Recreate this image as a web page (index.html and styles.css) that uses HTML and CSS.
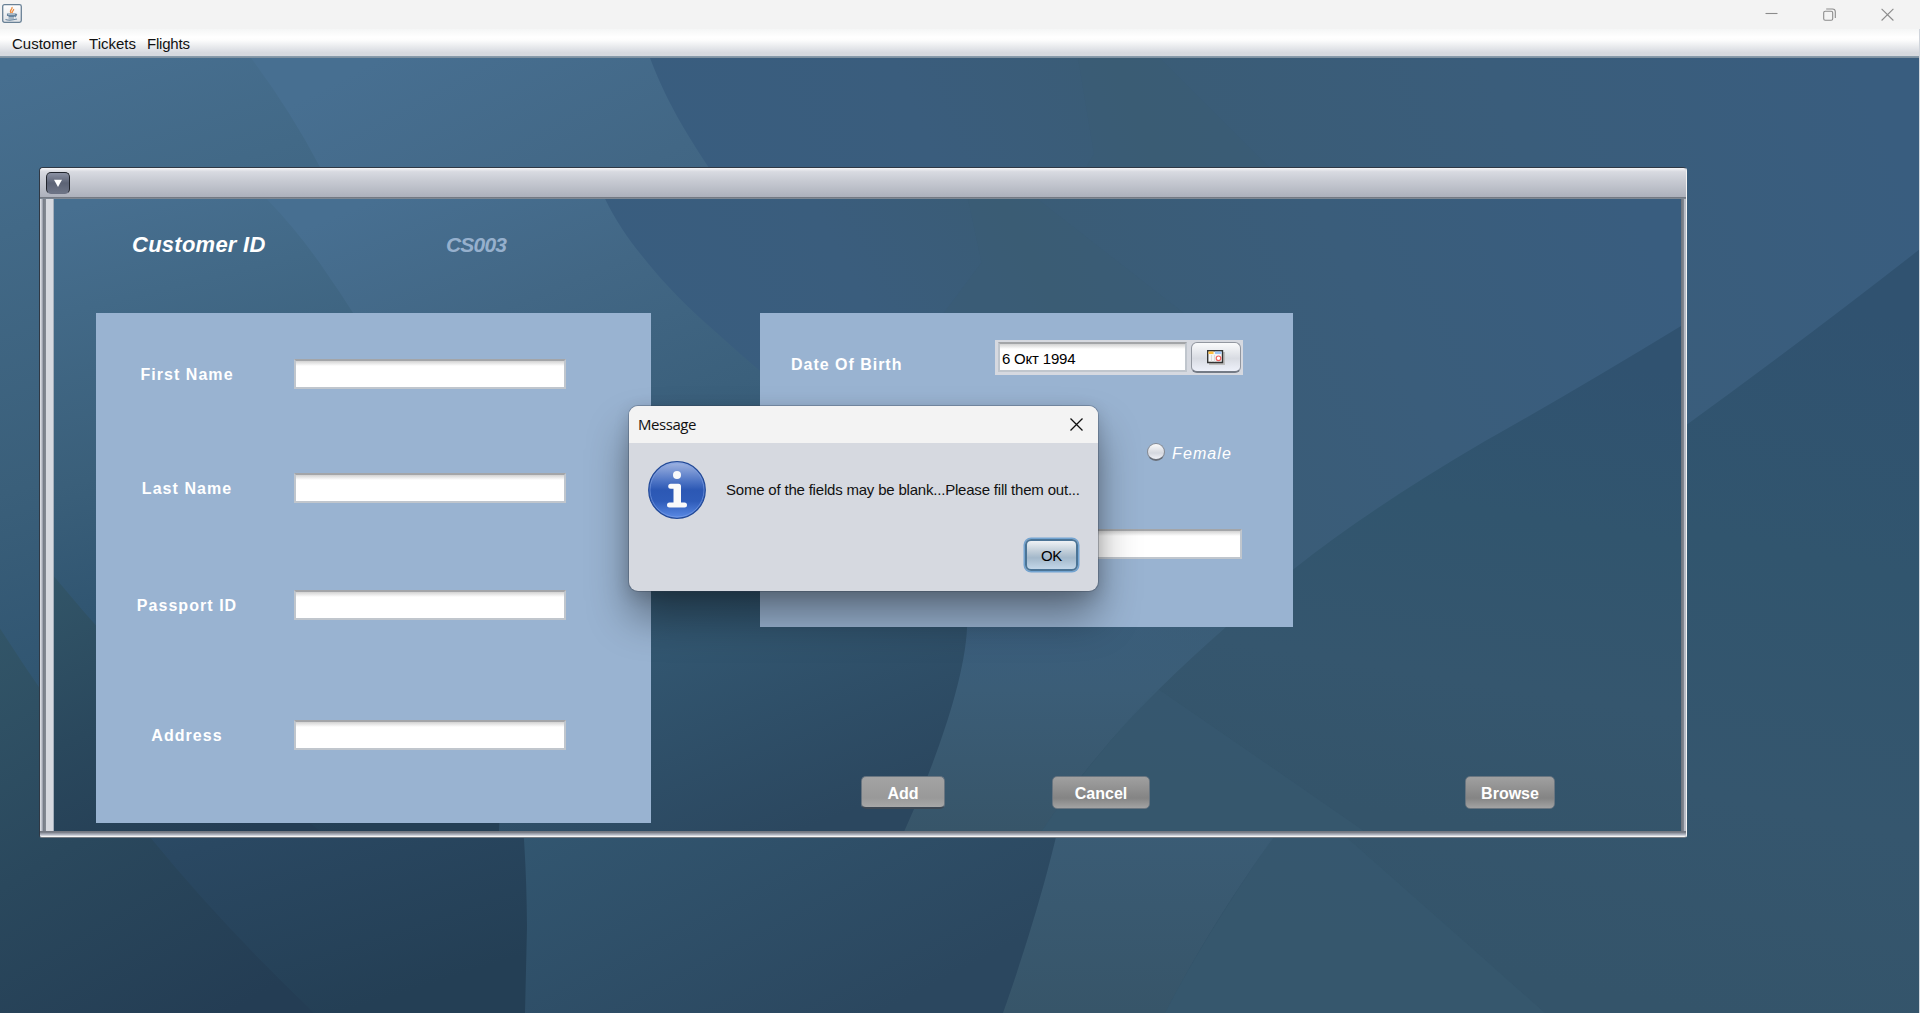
FILE: index.html
```html
<!DOCTYPE html>
<html lang="en">
<head>
<meta charset="utf-8">
<title>Customer</title>
<link rel="stylesheet" href="styles.css">
</head>
<body>
<svg class="defs" width="0" height="0" aria-hidden="true">
  <defs>
    <linearGradient id="g-left" gradientUnits="userSpaceOnUse" x1="60" y1="0" x2="360" y2="950">
      <stop offset="0" stop-color="#476f90"/><stop offset=".15" stop-color="#426987"/><stop offset=".4" stop-color="#3a5f7a"/><stop offset=".62" stop-color="#2f5470"/><stop offset=".8" stop-color="#2a4862"/><stop offset="1" stop-color="#243f55"/>
    </linearGradient>
    <linearGradient id="g-corner" gradientUnits="userSpaceOnUse" x1="0" y1="570" x2="230" y2="956">
      <stop offset="0" stop-color="#325568"/><stop offset=".5" stop-color="#2a485d"/><stop offset="1" stop-color="#243d54"/>
    </linearGradient>
    <linearGradient id="g-mid" gradientUnits="userSpaceOnUse" x1="380" y1="0" x2="880" y2="956">
      <stop offset="0" stop-color="#476f91"/><stop offset=".2" stop-color="#426785"/><stop offset=".5" stop-color="#385d78"/><stop offset=".7" stop-color="#325670"/><stop offset="1" stop-color="#2b475f"/>
    </linearGradient>
    <linearGradient id="g-right" gradientUnits="userSpaceOnUse" x1="700" y1="200" x2="1760" y2="-240">
      <stop offset="0" stop-color="#395d7f"/><stop offset=".22" stop-color="#3a5d7d"/><stop offset=".4" stop-color="#3a5c76"/><stop offset=".7" stop-color="#3a5d7b"/><stop offset="1" stop-color="#395d7f"/>
    </linearGradient>
    <linearGradient id="g-fade" gradientUnits="userSpaceOnUse" x1="0" y1="600" x2="0" y2="956">
      <stop offset="0" stop-color="#3b5f7a" stop-opacity="0"/><stop offset=".4" stop-color="#3b5d77"/><stop offset="1" stop-color="#375569"/>
    </linearGradient>
    <linearGradient id="g-slope" gradientUnits="userSpaceOnUse" x1="1850" y1="250" x2="1700" y2="956">
      <stop offset="0" stop-color="#305270"/><stop offset=".35" stop-color="#31556e"/><stop offset=".7" stop-color="#35566e"/><stop offset="1" stop-color="#34546a"/>
    </linearGradient>
    <linearGradient id="g-info" x1="0" y1="0" x2="0" y2="1">
      <stop offset="0" stop-color="#a3b6e2"/><stop offset=".35" stop-color="#4c73c4"/><stop offset=".5" stop-color="#2c58b4"/><stop offset=".7" stop-color="#2f5cb9"/><stop offset="1" stop-color="#5b8be6"/>
    </linearGradient>
    <symbol id="wall" viewBox="0 0 1919 956" preserveAspectRatio="none">
      <rect width="1919" height="956" fill="url(#g-right)"/>
      <rect y="600" width="1919" height="356" fill="url(#g-fade)"/>
      <path d="M1078 0 1094 96 1010 240 1400 240 1160 0Z" fill="#3a5a70" opacity=".25"/>
      <path d="M0 0H650C666 42 684 72 709 110 727 137 748 164 769 188L811 236C960 400 1080 520 1077 647 1074 740 1030 880 1003 956H0Z" fill="url(#g-mid)"/>
      <path d="M0 0H251Q290 52 321 111 338 142 352 171C450 370 526 600 527 870L525 956H0Z" fill="url(#g-left)"/>
      <path d="M0 571Q70 680 151 781 222 868 314 956H0Z" fill="url(#g-corner)"/>
      <path d="M1919 192Q1800 285 1687 367 1550 470 1462 560 1340 690 1273 781 1210 868 1165 956H1919Z" fill="url(#g-slope)"/>
      <path d="M1301 740 1482 900 1545 956H1165Q1210 868 1301 740Z" fill="#3d5f78" opacity=".25"/>
    </symbol>
  </defs>
</svg>

<div class="app">
  <header class="titlebar">
    <svg class="java" viewBox="0 0 20 19"><defs><linearGradient id="j" x1="0" y1="0" x2="0" y2="1"><stop offset="0" stop-color="#fff"/><stop offset="1" stop-color="#dfe2e6"/></linearGradient></defs>
      <rect x=".7" y=".7" width="18.6" height="17.6" rx="1.8" fill="url(#j)" stroke="#698196" stroke-width="1.3"/>
      <path d="M9.2 9C6.500 6.500 11 5.500 10 3M10.500 9C9 7.500 12.500 6.500 11.500 5" fill="none" stroke="#ee8a3c" stroke-width="1.300"/>
      <path d="M5.500 10H13.500V11.500H5.500ZM6.500 12.500H12.500M6.500 14H12M13.500 10Q16 10 13 13M3.500 15.500Q8 17 15 15" fill="none" stroke="#68859f" stroke-width="1.100"/>
    </svg>
    <div class="controls">
      <svg width="13" height="13" viewBox="0 0 13 13"><path d="M.5 7.500h12"/></svg>
      <svg width="13" height="13" viewBox="0 0 13 13"><rect x=".7" y="3.200" width="9" height="9" rx="1.500"/><path d="M3.200 1H9.500Q12.300 1 12.300 3.800V10"/></svg>
      <svg width="13" height="13" viewBox="0 0 13 13"><path d="M.6.8 12.400 12.500M12.400.8.6 12.500"/></svg>
    </div>
  </header>
  <nav class="menubar"><span>Customer</span><span>Tickets</span><span>Flights</span></nav>

  <main class="desktop">
    <svg class="wall"><use href="#wall"/></svg>

    <section class="frame">
      <div class="frame-title"><button class="frame-menu"><svg width="10" height="9" viewBox="0 0 10 9"><path d="M1 .7H9L5 8Z" fill="#fff"/></svg></button></div>
      <div class="frame-body">
        <div class="gutter"></div>
        <div class="content">
          <svg class="wall"><use href="#wall"/></svg>
          <div class="heading"><span class="id-label">Customer ID</span><span class="id-value">CS003</span></div>
          <div class="columns">
            <div class="panel names">
              <label>First Name</label><input class="field">
              <label>Last Name</label><input class="field">
              <label>Passport ID</label><input class="field">
              <label>Address</label><input class="field">
            </div>
            <div class="right">
              <div class="panel details">
                <div class="birth">
                  <label>Date Of Birth</label>
                  <div class="chooser">
                    <input class="field date" value="6 Окт 1994">
                    <button class="cal"><svg width="18" height="15" viewBox="0 0 18 15"><path d="M2 2H18V15H2Z" fill="#bfbfbf"/><path d="M.7.7H15.500V12.500H.7Z" fill="#f5f5f5" stroke="#333" stroke-width="1.400"/><path d="M1.500 1.500H6.500V4H1.500Z" fill="#ffbe3c"/><path d="M8 1.500H14.500V4H8Z" fill="#9fc5f4"/><path d="M4.500 5V11.500M7.500 5V11.500" stroke="#ddd"/><circle cx="11.500" cy="8.300" r="2.300" fill="#fff" stroke="#f0605f" stroke-width="1.200"/></svg></button>
                  </div>
                </div>
                <div class="gender"><i class="radio"></i><span>Female</span></div>
                <div class="phone"><input class="field"></div>
              </div>
              <div class="actions"><button class="act add">Add</button><button class="act cancel">Cancel</button><button class="act browse">Browse</button></div>
            </div>
          </div>
        </div>
      </div>
    </section>

    <section class="dialog">
      <div class="dialog-title"><span>Message</span><svg width="13" height="13" viewBox="0 0 13 13"><path d="M.5.5 12.500 12.500M12.500.5.5 12.500" stroke="#111" stroke-width="1.300"/></svg></div>
      <div class="dialog-main">
        <svg width="58" height="58" viewBox="0 0 58 58"><circle cx="29" cy="29" r="28.300" fill="url(#g-info)" stroke="#234a98" stroke-width="1.200"/><circle cx="29" cy="29" r="27" fill="none" stroke="#7fa0e4" stroke-opacity=".6"/><circle cx="29" cy="14" r="4" fill="#fafafa"/><path d="M22.700 25.200H30.500V44M21.500 44H36.500" fill="none" stroke="#fafafa" stroke-width="5" stroke-linecap="round" stroke-linejoin="round"/><path d="M25.500 25h7.500v19h-7.500z" fill="#fafafa"/></svg>
        <span>Some of the fields may be blank...Please fill them out...</span>
      </div>
      <div class="dialog-foot"><button class="ok">OK</button></div>
    </section>
  </main>
</div>
</body>
</html>
```
FILE: styles.css
```css
* { box-sizing: border-box; }
body { margin: 0; font: 15px/1.15 "Liberation Sans", Arial, sans-serif; color: #111; overflow: hidden; }
button, input { font: inherit; margin: 0; padding: 0; border: 0; }
.defs { position: absolute; }
.app { width: 1920px; height: 1013px; display: flex; flex-direction: column; border-right: 1px solid #d0d5dc; }

.titlebar { height: 29px; background: #f3f3f3; display: flex; justify-content: space-between; margin-right: -1px; padding: 4px 26px 0 2px; }
.java { width: 20px; height: 19px; }
.controls { display: flex; gap: 45px; padding-top: 4px; }
.controls svg { fill: none; stroke: #8b8b8b; stroke-width: 1.1; }
.controls svg:first-child path { transform: translateY(-2px); }

.menubar { height: 29px; display: flex; gap: 12px; padding: 6px 12px 0; background: linear-gradient(#f5f6f6, #fff 28%, #fdfdfd 38%, #d6d9df 82%, #d6d9df 93%, #8a9eae 93%, #7b8e9e); }
.menubar span:last-child { letter-spacing: -.2px; margin-left: -1px; }

.desktop { position: relative; flex: 1; overflow: hidden; }
.wall { position: absolute; left: 0; top: 0; width: 100%; height: 100%; }

.frame { position: absolute; left: 39px; top: 109px; width: 1648px; height: 671px; border: 1px solid #2f3844; border-right-color: #f4f4f4; border-bottom-color: #737b84; border-radius: 4px 4px 3px 3px; background: #a8adb8; overflow: hidden; display: flex; flex-direction: column; }
.frame-title { height: 31px; padding: 4px 6px; background: linear-gradient(#f6f5f6, #d8dae1 12%, #c8cbd3 40%, #adb1bc 93%, #70747d 94%, #838e9a); }
.frame-menu { width: 24px; height: 22px; border: 1px solid #20242c; border-bottom-color: #6c7284; border-radius: 5px; background: linear-gradient(#8b91a3, #5c6375 50%, #6d7486); display: flex; align-items: center; justify-content: center; }
.frame-body { flex: 1; display: flex; padding: 0 5px 6px 6px; background: linear-gradient(#0000 632px, #6f747d 632px, #80858f 634px, #aeb3bf 635px, #aeb3bf 636px, #f5f5f5 637px), linear-gradient(90deg, #d8dbe2 1px, #a7acb8 2px, #9ba0ac 3px, #757b86 3px, #858b95 6px, #0000 6px), linear-gradient(270deg, #b9bdc7 2px, #858b95 2px, #6c727c 5px); }
.gutter { width: 8px; background: #d6d9e0; border-right: 1px solid #a3aebb; }
.content { position: relative; flex: 1; }

.heading { position: relative; height: 114px; padding: 32px 0 0 78px; display: flex; font-weight: bold; font-style: italic; line-height: 24px; }
.id-label { width: 314px; font-size: 22px; letter-spacing: .25px; color: #fff; padding-top: 2px; }
.id-value { color: #96b0cd; padding-top: 2px; font-size: 21px; letter-spacing: -.8px; }

.columns { position: relative; display: flex; padding-left: 42px; gap: 109px; }
.panel { background: #99b3d1; }
.panel label { color: #fff; font-size: 16px; font-weight: bold; letter-spacing: 1.05px; white-space: nowrap; }
.names { width: 555px; height: 510px; padding-top: 46px; display: grid; grid-template: 114px 117px 130px 30px / 182px 272px; column-gap: 16px; align-content: start; text-align: center; }
.names label { line-height: 31px; }
.field { display: block; width: 100%; height: 30px; border: 2px solid #c0c6cd; border-top-color: #a3a5a8; background: linear-gradient(#d2d2d2, #fff 5px); outline: 0; }

.right { flex: 1; }
.details { width: 533px; height: 314px; padding: 27px 50px 0 31px; }
.birth { display: flex; justify-content: space-between; }
.birth label { padding-top: 16px; line-height: 18px; letter-spacing: .98px; }
.chooser { width: 248px; height: 35px; background: #d6d9e0; display: flex; gap: 4px; padding: 2px; }
.date { width: 189px; margin-left: 1px; padding: 2px 0 0 2px; flex: none; letter-spacing: -.2px; }
.cal { width: 50px; height: 31px; border: 1.5px solid #9297a0; border-bottom: 2px solid #747b86; border-radius: 6px; background: linear-gradient(#fafbfc, #d8dbe2 55%, #eef1fa); display: flex; align-items: center; justify-content: center; }
.gender { display: flex; justify-content: flex-end; gap: 7px; margin: 67px 11px 0 0; height: 20px; align-items: center; color: #fff; font-size: 16px; font-style: italic; letter-spacing: 1.1px; }
.gender span { padding-top: 4px; }
.radio { width: 18px; height: 18px; border-radius: 50%; border: 1px solid #868b94; border-bottom: 2px solid #696f79; background: linear-gradient(#fbfbfb, #d5d8df 60%, #f1f3f8); }
.phone { margin: 67px 1px 0 auto; width: 272px; }

.actions { display: flex; margin-top: 149px; padding-left: 101px; }
.act { height: 33px; color: #fff; font-size: 16px; font-weight: bold; border-radius: 5px; border: 1px solid #697580; background: linear-gradient(#a0a0a0, #929292 35%, #848484 68%, #a3a3a3); padding-top: 3px; }
.add { width: 84px; margin-right: 107px; padding-top: 4px; background: linear-gradient(#a3a3a3, #999 70%, #a8a8a8); border-bottom: 2px solid #3d4854; }
.cancel { width: 98px; margin-right: 315px; }
.browse { width: 90px; }

.dialog { position: absolute; left: 629px; top: 348px; width: 469px; height: 185px; border-radius: 9px; background: #d6d9e0; overflow: hidden; box-shadow: 0 0 0 1px rgba(50,60,75,.3), 0 26px 42px rgba(0,0,0,.38), 0 4px 16px rgba(0,0,0,.16); }
.dialog-title { height: 37px; background: #f3f3f3; padding: 0 15px 0 9px; display: flex; align-items: center; justify-content: space-between; font: 15px "Open Sans", "Noto Sans", sans-serif; letter-spacing: -.45px; }
.dialog-title span { margin-top: -1px; }
.dialog-title svg { margin-top: -1px; }
.dialog-main { display: flex; align-items: center; gap: 20px; padding: 17px 0 0 19px; height: 76px; white-space: nowrap; letter-spacing: -.2px; }
.dialog-foot { display: flex; justify-content: flex-end; padding: 20px 20px 0 0; }
.ok { width: 53px; height: 32px; border: 2px solid #4b7496; border-radius: 6px; box-shadow: 0 0 0 1.5px #73a4d1; background: linear-gradient(#eef2f5, #bccad6 40%, #a3b8ca 60%, #c3d7e9); padding-top: 2px; letter-spacing: -.4px; }
```
